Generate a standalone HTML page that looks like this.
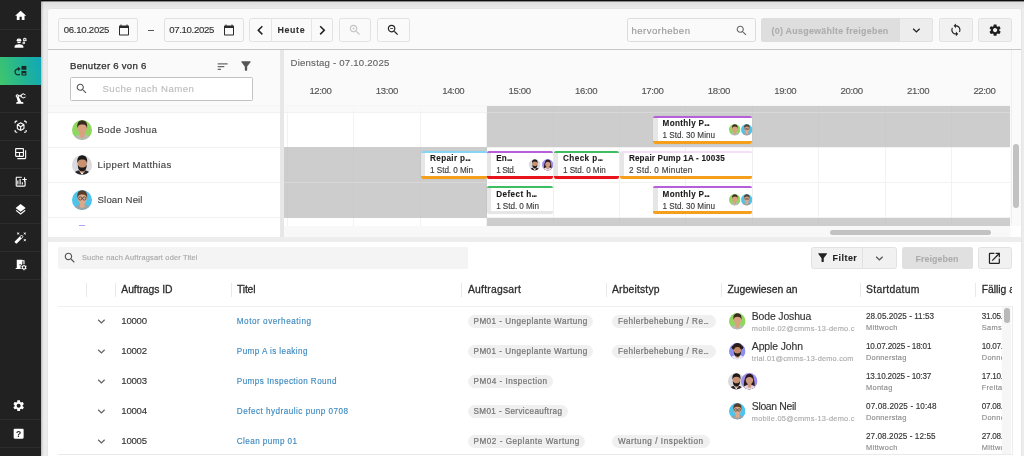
<!DOCTYPE html>
<html lang="de"><head><meta charset="utf-8"><title>Plantafel</title>
<style>
html,body{margin:0;padding:0}
body{width:1024px;height:456px;overflow:hidden;position:relative;background:#ececec;font-family:"Liberation Sans", sans-serif;will-change:transform}
.b{position:absolute}
.ic{position:absolute;display:block;overflow:visible}
.t{position:absolute;white-space:nowrap;display:block}
.c{overflow:hidden}
.e{letter-spacing:-.085em}
</style></head>
<body>
<div class="b" style="left:0.00px;top:0.00px;width:1024.00px;height:10.00px;background:linear-gradient(#dcdcdc,#ececec)"></div>
<div class="b" style="left:0.00px;top:0.00px;width:1024.00px;height:1.00px;background:#0d0d0d"></div>
<div class="b" style="left:0.00px;top:1.00px;width:1024.00px;height:1.00px;background:rgba(0,0,0,.38)"></div>
<div class="b" style="left:0.00px;top:0.00px;width:41.30px;height:456.00px;background:#212121;box-shadow:1px 0 2px rgba(0,0,0,.25)"></div>
<div class="b" style="left:0.00px;top:28.75px;width:41.30px;height:1.00px;background:#2c2c2c"></div>
<div class="b" style="left:0.00px;top:56.50px;width:41.30px;height:1.00px;background:#2c2c2c"></div>
<div class="b" style="left:0.00px;top:84.25px;width:41.30px;height:1.00px;background:#2c2c2c"></div>
<div class="b" style="left:0.00px;top:112.00px;width:41.30px;height:1.00px;background:#2c2c2c"></div>
<div class="b" style="left:0.00px;top:139.75px;width:41.30px;height:1.00px;background:#2c2c2c"></div>
<div class="b" style="left:0.00px;top:167.50px;width:41.30px;height:1.00px;background:#2c2c2c"></div>
<div class="b" style="left:0.00px;top:195.25px;width:41.30px;height:1.00px;background:#2c2c2c"></div>
<div class="b" style="left:0.00px;top:223.00px;width:41.30px;height:1.00px;background:#2c2c2c"></div>
<div class="b" style="left:0.00px;top:250.75px;width:41.30px;height:1.00px;background:#2c2c2c"></div>
<div class="b" style="left:0.00px;top:278.50px;width:41.30px;height:1.00px;background:#2c2c2c"></div>
<div class="b" style="left:0.00px;top:57.00px;width:41.30px;height:27.75px;background:linear-gradient(75deg,#40c66b 0%,#22b494 55%,#10a7ba 100%)"></div>
<div class="b" style="left:0.00px;top:419.00px;width:41.30px;height:1.00px;background:#2c2c2c"></div>
<div class="b" style="left:0.00px;top:447.10px;width:41.30px;height:1.00px;background:#2c2c2c"></div>
<svg class="ic" style="left:14.15px;top:8.72px;width:13.30px;height:13.30px" viewBox="0 0 24 24" fill="#fff"><path d="M10 20v-6h4v6h5v-8h3L12 3 2 12h3v8z"/></svg>
<svg class="ic" style="left:14.15px;top:36.48px;width:13.30px;height:13.30px" viewBox="0 0 24 24"><path fill="#fff" d="M9 15c-2.670 0-8 1.340-8 4v2h16v-2c0-2.660-5.330-4-8-4zM22.100 6.840c.010-.110.020-.220.020-.340 0-.120-.010-.230-.030-.340l.740-.580c.070-.050.080-.150.040-.220l-.700-1.210c-.040-.080-.140-.100-.210-.080l-.860.350c-.180-.140-.380-.250-.590-.340l-.130-.930c-.020-.090-.090-.150-.180-.150h-1.400c-.090 0-.160.060-.170.150l-.130.930c-.210.090-.410.210-.590.340l-.870-.350c-.080-.030-.170 0-.210.080l-.700 1.210c-.040.080-.030.170.040.220l.740.580c-.020.110-.030.230-.030.340 0 .110.010.230.030.340l-.740.580c-.070.050-.080.150-.040.220l.700 1.210c.040.080.140.100.210.080l.870-.350c.180.140.380.250.590.340l.130.930c.010.090.080.150.170.150h1.400c.090 0 .160-.060.170-.150l.130-.930c.210-.090.410-.210.590-.340l.870.350c.080.030.170 0 .210-.080l.700-1.210c.040-.080.030-.170-.040-.220l-.730-.580zm-2.600.910c-.690 0-1.250-.560-1.250-1.250s.560-1.250 1.250-1.250 1.250.560 1.250 1.250-.560 1.250-1.250 1.250zM19.920 11.680l-.500-.870c-.030-.060-.100-.080-.150-.060l-.620.250c-.130-.100-.270-.180-.420-.240l-.090-.660c-.020-.060-.080-.100-.140-.100h-1c-.060 0-.110.040-.120.110l-.090.660c-.150.060-.290.150-.420.240l-.620-.250c-.060-.020-.120 0-.150.060l-.500.870c-.030.060-.020.120.030.160l.530.410c-.010.080-.020.160-.020.240 0 .080.010.170.020.240l-.530.410c-.050.040-.060.110-.030.160l.500.870c.030.060.100.080.150.060l.620-.250c.130.100.270.180.420.240l.090.660c.010.070.060.110.120.110h1c.060 0 .120-.040.120-.110l.090-.660c.150-.060.290-.150.420-.240l.620.250c.060.020.120 0 .150-.060l.500-.870c.030-.060.020-.120-.030-.160l-.520-.410c.010-.080.020-.160.020-.240 0-.080-.010-.170-.020-.240l.530-.410c.050-.040.060-.110.030-.160zm-3.420 1.650c-.460 0-.830-.380-.830-.830 0-.460.380-.830.830-.830s.830.380.830.830c0 .460-.370.830-.830.830zM4.740 9h8.530c.270 0 .490-.220.490-.490v-.020c0-.270-.220-.490-.490-.490H13c0-1.480-.810-2.750-2-3.450V5.500c0 .280-.220.500-.5.500s-.5-.220-.5-.5V4.140C9.680 4.060 9.350 4 9 4s-.680.060-1 .140V5.500c0 .280-.220.500-.5.500S7 5.780 7 5.500v-.950C5.810 5.250 5 6.520 5 8h-.260c-.270 0-.490.220-.490.490v.030c0 .260.220.480.490.480zM9 13c1.860 0 3.410-1.280 3.860-3H5.140c.450 1.720 2 3 3.860 3z"/></svg>
<svg class="ic" style="left:14.15px;top:64.22px;width:13.30px;height:13.30px" viewBox="0 0 24 24"><g fill="#1b2626"><path d="M10.700 18.400A5.400 5.400 0 1 1 7.200 8.800" fill="none" stroke="#1b2626" stroke-width="2.300"/><path d="M7 5l5 3.800L7 12.600z"/><rect x="13.600" y="3.500" width="8.700" height="6.900"/><path d="M13.600 12.700h8.700v8.200h-8.700zM15.400 16.600v2.400h5.100v-2.400z" fill-rule="evenodd"/></g></svg>
<svg class="ic" style="left:14.15px;top:91.97px;width:13.30px;height:13.30px" viewBox="0 0 24 24"><path fill="#fff" d="M19.930 8.350l-3.600 1.680L14 7.700V6.300l2.330-2.330 3.600 1.680c.380.180.820.010 1-.360.180-.380.010-.820-.360-1l-3.920-1.830c-.380-.180-.830-.100-1.130.200L13.780 4.400c-.180-.240-.460-.400-.780-.400-.550 0-1 .450-1 1v1H8.820C8.400 4.840 7.300 4 6 4 4.340 4 3 5.340 3 7c0 1.100.600 2.050 1.480 2.580L7.080 18H6c-1.100 0-2 .900-2 2v1h13v-1c0-1.100-.900-2-2-2h-1.620L8.410 8.770c.170-.240.310-.490.410-.770H12v1c0 .550.450 1 1 1 .320 0 .600-.160.780-.400l1.740 1.740c.300.300.750.380 1.130.200l3.920-1.830c.380-.180.540-.620.360-1-.180-.370-.620-.540-1-.360zM6 8c-.550 0-1-.450-1-1s.450-1 1-1 1 .450 1 1-.450 1-1 1z"/></svg>
<svg class="ic" style="left:14.15px;top:119.72px;width:13.30px;height:13.30px" viewBox="0 0 24 24" fill="#fff"><path d="M3 4c0-.55.45-1 1-1h2V1H4C2.34 1 1 2.34 1 4v2h2V4zm0 16v-2H1v2c0 1.66 1.34 3 3 3h2v-2H4c-.55 0-1-.45-1-1zM20 1h-2v2h2c.55 0 1 .45 1 1v2h2V4c0-1.660-1.340-3-3-3zm1 19c0 .55-.45 1-1 1h-2v2h2c1.660 0 3-1.340 3-3v-2h-2v2zm-2-5.130V9.130c0-.720-.380-1.380-1-1.730l-5-2.880c-.310-.180-.650-.270-1-.270s-.690.090-1 .270L6 7.390c-.620.360-1 1.020-1 1.740v5.740c0 .720.380 1.380 1 1.730l5 2.880c.310.180.650.270 1 .270s.690-.090 1-.270l5-2.880c.620-.350 1-1.010 1-1.730zm-8 2.300l-4-2.300v-4.630l4 2.330v4.600zm1-6.330L8.040 8.530 12 6.250l3.960 2.280L12 10.840zm5 4.030l-4 2.300v-4.600l4-2.330v4.630z"/></svg>
<svg class="ic" style="left:14.15px;top:147.47px;width:13.30px;height:13.30px" viewBox="0 0 24 24" fill="#fff"><path d="M20 6v14H6v2h14c1.100 0 2-.9 2-2V6h-2zM16 2H4c-1.100 0-2 .9-2 2v12c0 1.100.9 2 2 2h12c1.100 0 2-.9 2-2V4c0-1.100-.9-2-2-2zM9 16H4v-5h5v5zm7 0h-5v-5h5v5zm0-7H4V4h12v5z"/></svg>
<svg class="ic" style="left:14.15px;top:175.22px;width:13.30px;height:13.30px" viewBox="0 0 24 24" fill="#fff"><path d="M6 10h2v7H6zM14 13h2v4h-2zM10 7h2v10h-2zM20 7V4h-2v3h-3v2h3v3h2V9h3V7zM19 19H5V5h9V3H5c-1.100 0-2 .9-2 2v14c0 1.100.9 2 2 2h14c1.100 0 2-.9 2-2v-9h-2v9z"/></svg>
<svg class="ic" style="left:14.15px;top:202.97px;width:13.30px;height:13.30px" viewBox="0 0 24 24" fill="#fff"><path d="M11.99 18.54l-7.37-5.73L3 14.07l9 7 9-7-1.63-1.27-7.38 5.74zM12 16l7.36-5.73L21 9l-9-7-9 7 1.63 1.27L12 16z"/></svg>
<svg class="ic" style="left:14.15px;top:230.72px;width:13.30px;height:13.30px" viewBox="0 0 24 24" fill="#fff"><path d="M7.5 5.600L10 7 8.600 4.500 10 2 7.500 3.400 5 2l1.400 2.500L5 7zM19.500 15.400L17 14l1.400 2.500L17 19l2.500-1.400L22 19l-1.400-2.500L22 14zM22 2l-2.500 1.400L17 2l1.400 2.500L17 7l2.500-1.400L22 7l-1.400-2.500zM14.370 7.290c-.390-.390-1.020-.390-1.410 0L1.290 18.960c-.390.390-.390 1.020 0 1.410l2.340 2.340c.390.390 1.020.390 1.410 0L16.700 11.050c.390-.390.390-1.020 0-1.410l-2.330-2.350zm-1.030 5.490l-2.120-2.120 2.440-2.440 2.120 2.120-2.440 2.440z"/></svg>
<svg class="ic" style="left:14.15px;top:258.48px;width:13.30px;height:13.30px" viewBox="0 0 24 24"><path fill="#fff" fill-rule="evenodd" d="M21.690 16.370l1.140-1-1-1.730-1.450.490c-.320-.270-.680-.480-1.080-.630L19 12h-2l-.300 1.490c-.400.150-.760.360-1.080.630l-1.450-.490-1 1.730 1.140 1c-.080.500-.080.760 0 1.260l-1.140 1 1 1.730 1.450-.490c.320.270.680.480 1.080.630L17 22h2l.300-1.490c.400-.150.760-.360 1.080-.630l1.450.490 1-1.730-1.140-1c.080-.510.080-.770 0-1.270zM18 19c-1.100 0-2-.9-2-2s.9-2 2-2 2 .9 2 2-.9 2-2 2zM5 3h10v1h4v6.800h-2V6h-2v5.300c-2 .9-3.300 3-3.300 5.300 0 1.300.3 2.400.9 3.400H3v-2h2zM10 11v2h2v-2z"/></svg>
<svg class="ic" style="left:11.75px;top:399.15px;width:13.30px;height:13.30px" viewBox="0 0 24 24" fill="#fff"><path d="M19.14 12.94c.04-.3.06-.61.06-.94 0-.32-.02-.64-.07-.94l2.03-1.58c.18-.14.23-.41.12-.61l-1.92-3.32c-.12-.22-.37-.29-.59-.22l-2.39.96c-.5-.38-1.03-.7-1.62-.94l-.36-2.54c-.04-.24-.24-.41-.48-.41h-3.84c-.24 0-.43.17-.47.41l-.36 2.54c-.59.24-1.13.57-1.62.94l-2.39-.96c-.22-.08-.47 0-.59.22L2.74 8.87c-.12.21-.08.47.12.61l2.03 1.58c-.05.3-.09.63-.09.94s.02.64.07.94l-2.03 1.58c-.18.14-.23.41-.12.61l1.92 3.32c.12.22.37.29.59.22l2.39-.96c.5.38 1.03.7 1.62.94l.36 2.54c.05.24.24.41.48.41h3.84c.24 0 .44-.17.47-.41l.36-2.54c.59-.24 1.13-.56 1.62-.94l2.39.96c.22.08.47 0 .59-.22l1.92-3.32c.12-.22.07-.47-.12-.61l-2.01-1.58zM12 15.6c-1.98 0-3.6-1.62-3.6-3.6s1.62-3.6 3.6-3.6 3.6 1.62 3.6 3.6-1.62 3.6-3.6 3.6z"/></svg>
<svg class="ic" style="left:11.75px;top:426.95px;width:13.30px;height:13.30px" viewBox="0 0 24 24"><rect x="3" y="3" width="18" height="18" rx="2" fill="#fff"/><text x="12" y="17.800" text-anchor="middle" font-family="Liberation Sans, sans-serif" font-weight="700" font-size="15.500" fill="#212121">?</text></svg>
<div class="b" style="left:48.00px;top:9.00px;width:973.00px;height:453.00px;background:#ededed;border-radius:2.500px;box-shadow:0 0 1.500px rgba(0,0,0,.12)"></div>
<div class="b" style="left:48.00px;top:9.00px;width:973.00px;height:228.40px;background:#fafafa;border-radius:2.500px 2.500px 0 0"></div>
<div class="b" style="left:48.00px;top:49.00px;width:973.00px;height:1.40px;background:#c6c6c6"></div>
<div class="b" style="left:58.10px;top:18.10px;width:79.90px;height:23.50px;box-sizing:border-box;border-radius:2.500px;background:#fafafa;border:1px solid #e0e0e0"></div>
<span class="t" style="left:63.70px;top:23px;font-size:9.60px;line-height:14px;color:#333;letter-spacing:-0.257px;-webkit-text-stroke:0.14px">06.10.2025</span>
<svg class="ic" style="left:118.10px;top:24.40px;width:12.00px;height:12.00px" viewBox="0 0 24 24" fill="#2b2b2b"><path d="M20 3h-1V1h-2v2H7V1H5v2H4c-1.1 0-2 .9-2 2v16c0 1.1.9 2 2 2h16c1.1 0 2-.9 2-2V5c0-1.1-.9-2-2-2zm0 18H4V8h16v13z"/></svg>
<div class="b" style="left:148.00px;top:29.60px;width:5.60px;height:0.90px;background:#555"></div>
<div class="b" style="left:163.60px;top:18.10px;width:80.00px;height:23.50px;box-sizing:border-box;border-radius:2.500px;background:#fafafa;border:1px solid #e0e0e0"></div>
<span class="t" style="left:169.20px;top:23px;font-size:9.60px;line-height:14px;color:#333;letter-spacing:-0.324px;-webkit-text-stroke:0.14px">07.10.2025</span>
<svg class="ic" style="left:223.10px;top:24.40px;width:12.00px;height:12.00px" viewBox="0 0 24 24" fill="#2b2b2b"><path d="M20 3h-1V1h-2v2H7V1H5v2H4c-1.1 0-2 .9-2 2v16c0 1.1.9 2 2 2h16c1.1 0 2-.9 2-2V5c0-1.1-.9-2-2-2zm0 18H4V8h16v13z"/></svg>
<div class="b" style="left:248.60px;top:18.10px;width:84.90px;height:23.50px;box-sizing:border-box;border-radius:2.500px;background:#fafafa;border:1px solid #e2e2e2"></div>
<div class="b" style="left:271.20px;top:18.10px;width:1.00px;height:23.50px;background:#e6e6e6"></div>
<div class="b" style="left:310.50px;top:18.10px;width:1.00px;height:23.50px;background:#e6e6e6"></div>
<svg class="ic" style="left:250.55px;top:20.65px;width:18.50px;height:18.50px" viewBox="0 0 24 24" fill="#222"><path d="M15.41 7.41L14 6l-6 6 6 6 1.41-1.41L10.83 12z"/></svg>
<span class="t" style="left:277.60px;top:23px;font-size:8.90px;line-height:14px;color:#333;font-weight:700;letter-spacing:0.582px;-webkit-text-stroke:0.10px">Heute</span>
<svg class="ic" style="left:313.05px;top:20.65px;width:18.50px;height:18.50px" viewBox="0 0 24 24" fill="#222"><path d="M10 6L8.59 7.41 13.17 12l-4.58 4.59L10 18l6-6z"/></svg>
<div class="b" style="left:338.50px;top:18.10px;width:32.80px;height:23.50px;box-sizing:border-box;border-radius:2.500px;background:#fafafa;border:1px solid #e2e2e2"></div>
<svg class="ic" style="left:348.30px;top:23.20px;width:14.00px;height:14.00px" viewBox="0 0 24 24" fill="#c4c4c4"><path d="M15.5 14h-.79l-.28-.27C15.41 12.59 16 11.11 16 9.5 16 5.91 13.09 3 9.5 3S3 5.91 3 9.5 5.91 16 9.5 16c1.61 0 3.09-.59 4.23-1.57l.27.28v.79l5 4.99L20.49 19l-4.99-5zm-6 0C7.01 14 5 11.99 5 9.5S7.01 5 9.5 5 14 7.01 14 9.5 11.99 14 9.5 14zM12 10h-2v2H9v-2H7V9h2V7h1v2h2v1z"/></svg>
<div class="b" style="left:376.60px;top:18.10px;width:33.00px;height:23.50px;box-sizing:border-box;border-radius:2.500px;background:#fafafa;border:1px solid #e2e2e2"></div>
<svg class="ic" style="left:386.20px;top:23.10px;width:14.20px;height:14.20px" viewBox="0 0 24 24" fill="#222"><path d="M15.5 14h-.79l-.28-.27C15.41 12.59 16 11.11 16 9.5 16 5.91 13.09 3 9.5 3S3 5.91 3 9.5 5.91 16 9.5 16c1.61 0 3.09-.59 4.23-1.57l.27.28v.79l5 4.99L20.49 19l-4.99-5zm-6 0C7.01 14 5 11.99 5 9.5S7.01 5 9.5 5 14 7.01 14 9.5 11.99 14 9.5 14zM7 9h5v1H7z"/></svg>
<div class="b" style="left:627.00px;top:18.10px;width:128.60px;height:23.50px;box-sizing:border-box;border-radius:2.500px;background:#fafafa;border:1px solid #dcdcdc"></div>
<span class="t" style="left:631.40px;top:24px;font-size:9.60px;line-height:14px;color:#9a9a9a;letter-spacing:0.473px;-webkit-text-stroke:0.14px">hervorheben</span>
<svg class="ic" style="left:734.75px;top:23.55px;width:13.30px;height:13.30px" viewBox="0 0 24 24" fill="#666"><path d="M15.5 14h-.79l-.28-.27C15.41 12.59 16 11.11 16 9.5 16 5.91 13.09 3 9.5 3S3 5.91 3 9.5 5.91 16 9.5 16c1.61 0 3.09-.59 4.23-1.57l.27.28v.79l5 4.99L20.49 19l-4.99-5zm-6 0C7.01 14 5 11.99 5 9.5S7.01 5 9.5 5 14 7.01 14 9.5 11.99 14 9.5 14z"/></svg>
<div class="b" style="left:761.00px;top:18.10px;width:138.80px;height:23.50px;box-sizing:border-box;border-radius:2.500px;background:#dedede;border-radius:2.500px 0 0 2.500px"></div>
<span class="t" style="left:771.50px;top:24px;font-size:8.90px;line-height:14px;color:#adadad;font-weight:700;letter-spacing:0.277px;-webkit-text-stroke:0.10px">(0) Ausgewählte freigeben</span>
<div class="b" style="left:899.60px;top:18.10px;width:33.90px;height:23.50px;box-sizing:border-box;border-radius:2.500px;background:#ededed;border:1px solid #e2e2e2;border-left:0;border-radius:0 2.500px 2.500px 0"></div>
<svg class="ic" style="left:909.10px;top:22.80px;width:14.80px;height:14.80px" viewBox="0 0 24 24" fill="#222"><path d="M16.59 8.59L12 13.17 7.41 8.59 6 10l6 6 6-6z"/></svg>
<div class="b" style="left:939.00px;top:18.10px;width:33.50px;height:23.50px;box-sizing:border-box;border-radius:2.500px;background:#f1f1f1;border:1px solid #e2e2e2"></div>
<svg class="ic" style="left:948.80px;top:23.30px;width:13.80px;height:13.80px" viewBox="0 0 24 24" fill="#222"><path d="M12 4V1L8 5l4 4V6c3.31 0 6 2.69 6 6 0 1.01-.25 1.97-.7 2.8l1.46 1.46C19.54 15.03 20 13.57 20 12c0-4.42-3.58-8-8-8zm0 14c-3.31 0-6-2.69-6-6 0-1.01.25-1.97.7-2.8L5.24 7.74C4.46 8.97 4 10.43 4 12c0 4.42 3.58 8 8 8v3l4-4-4-4v3z"/></svg>
<div class="b" style="left:977.50px;top:18.10px;width:34.30px;height:23.50px;box-sizing:border-box;border-radius:2.500px;background:#f1f1f1;border:1px solid #e2e2e2"></div>
<svg class="ic" style="left:987.60px;top:23.10px;width:14.20px;height:14.20px" viewBox="0 0 24 24" fill="#1d1d1d"><path d="M19.14 12.94c.04-.3.06-.61.06-.94 0-.32-.02-.64-.07-.94l2.03-1.58c.18-.14.23-.41.12-.61l-1.92-3.32c-.12-.22-.37-.29-.59-.22l-2.39.96c-.5-.38-1.03-.7-1.62-.94l-.36-2.54c-.04-.24-.24-.41-.48-.41h-3.84c-.24 0-.43.17-.47.41l-.36 2.54c-.59.24-1.13.57-1.62.94l-2.39-.96c-.22-.08-.47 0-.59.22L2.74 8.87c-.12.21-.08.47.12.61l2.03 1.58c-.05.3-.09.63-.09.94s.02.64.07.94l-2.03 1.58c-.18.14-.23.41-.12.61l1.92 3.32c.12.22.37.29.59.22l2.39-.96c.5.38 1.03.7 1.62.94l.36 2.54c.05.24.24.41.48.41h3.84c.24 0 .44-.17.47-.41l.36-2.54c.59-.24 1.13-.56 1.62-.94l2.39.96c.22.08.47 0 .59-.22l1.92-3.32c.12-.22.07-.47-.12-.61l-2.01-1.58zM12 15.6c-1.98 0-3.6-1.62-3.6-3.6s1.62-3.6 3.6-3.6 3.6 1.62 3.6 3.6-1.62 3.6-3.6 3.6z"/></svg>
<div class="b" style="left:48.00px;top:105.50px;width:231.50px;height:131.90px;background:#fff"></div>
<span class="t" style="left:70.00px;top:59px;font-size:9.62px;line-height:14px;color:#2e2e2e;letter-spacing:0.243px;-webkit-text-stroke:0.25px">Benutzer 6 von 6</span>
<svg class="ic" style="left:215.85px;top:59.55px;width:13.30px;height:13.30px" viewBox="0 0 24 24" fill="#6a6a6a"><path d="M3 18h6v-2H3v2zM3 6v2h18V6H3zm0 7h12v-2H3v2z"/></svg>
<svg class="ic" style="left:238.60px;top:59.20px;width:14.00px;height:14.00px" viewBox="0 0 24 24" fill="#555"><path d="M4.25 5.61C6.27 8.2 10 13 10 13v6c0 .55.45 1 1 1h2c.55 0 1-.45 1-1v-6s3.72-4.8 5.74-7.39c.51-.66.04-1.61-.79-1.61H5.04c-.83 0-1.3.95-.79 1.61z"/></svg>
<div class="b" style="left:70.00px;top:77.00px;width:183.00px;height:24.00px;box-sizing:border-box;background:#fff;border:1px solid #c2c2c2;border-radius:1.500px"></div>
<svg class="ic" style="left:75.15px;top:82.35px;width:13.30px;height:13.30px" viewBox="0 0 24 24" fill="#555"><path d="M15.5 14h-.79l-.28-.27C15.41 12.59 16 11.11 16 9.5 16 5.91 13.09 3 9.5 3S3 5.91 3 9.5 5.91 16 9.5 16c1.61 0 3.09-.59 4.23-1.57l.27.28v.79l5 4.99L20.49 19l-4.99-5zm-6 0C7.01 14 5 11.99 5 9.5S7.01 5 9.5 5 14 7.01 14 9.5 11.99 14 9.5 14z"/></svg>
<span class="t" style="left:102.50px;top:82px;font-size:9.62px;line-height:14px;color:#bdbdbd;letter-spacing:0.460px;-webkit-text-stroke:0.14px">Suche nach Namen</span>
<div class="b" style="left:48.00px;top:105.50px;width:231.50px;height:6.50px;background:#f9f9f9"></div>
<div class="b" style="left:48.00px;top:105.00px;width:231.50px;height:1.00px;background:#f4f4f4"></div>
<div class="b" style="left:48.00px;top:111.50px;width:231.50px;height:1.00px;background:#f1f1f1"></div>
<div class="b" style="left:48.00px;top:146.50px;width:231.50px;height:1.00px;background:#f1f1f1"></div>
<div class="b" style="left:48.00px;top:181.50px;width:231.50px;height:1.00px;background:#f1f1f1"></div>
<div class="b" style="left:48.00px;top:216.50px;width:231.50px;height:1.00px;background:#f1f1f1"></div>
<svg class="ic" style="left:71.50px;top:119.50px;width:20.00px;height:20.00px" viewBox="0 0 40 40"><defs><clipPath id="c1"><circle cx="20" cy="20" r="20"/></clipPath></defs><g clip-path="url(#c1)"><rect width="40" height="40" fill="#8fd75f"/><path d="M4 42c0-9 5-13 16.500-13S37 33 37 42z" fill="#b9b9b9"/><g transform="translate(20.500 16.300) scale(1.250) translate(-20 -17.500)"><rect x="16.300" y="23" width="7.400" height="10" rx="2.500" fill="#d9a17f"/><ellipse cx="20" cy="17.500" rx="7.300" ry="9.300" fill="#d9a17f"/><path d="M12.400 18c-1.600-9 2.600-13 7.600-13s9.200 4 7.600 13c-.8-4.500-2.300-6.500-7.600-6.500S13.200 13.500 12.400 18z" fill="#3a2a20"/></g></g></svg>
<span class="t" style="left:97.60px;top:123px;font-size:9.62px;line-height:14px;color:#444;letter-spacing:0.319px;-webkit-text-stroke:0.14px">Bode Joshua</span>
<svg class="ic" style="left:71.50px;top:154.50px;width:20.00px;height:20.00px" viewBox="0 0 40 40"><defs><clipPath id="c2"><circle cx="20" cy="20" r="20"/></clipPath></defs><g clip-path="url(#c2)"><rect width="40" height="40" fill="#d9d9de"/><path d="M4 42c0-9 5-13 16.500-13S37 33 37 42z" fill="#f2f2f2"/><path d="M4 42c0-8 4-10.500 10-11.300l6 9.300 6-9.300c6 .8 10 3.300 10 11.300z" fill="#25252b"/><path d="M15 30.500l5 9 5-9z" fill="#f6f6f6"/><g transform="translate(20.500 16.300) scale(1.250) translate(-20 -17.500)"><rect x="16.300" y="23" width="7.400" height="10" rx="2.500" fill="#c9916f"/><ellipse cx="20" cy="17.500" rx="7.300" ry="9.300" fill="#c9916f"/><path d="M12.400 18c-1.600-9 2.600-13 7.600-13s9.200 4 7.600 13c-.8-4.500-2.300-6.500-7.600-6.500S13.200 13.500 12.400 18z" fill="#1d1a19"/><path d="M12.800 19.500c.3 9 3.400 11 7.200 11s6.900-2 7.200-11c-1.500 4-3.700 5-7.200 5s-5.700-1-7.200-5z" fill="#1d1a19"/></g></g></svg>
<span class="t" style="left:97.60px;top:158px;font-size:9.62px;line-height:14px;color:#444;letter-spacing:0.355px;-webkit-text-stroke:0.14px">Lippert Matthias</span>
<svg class="ic" style="left:71.50px;top:189.50px;width:20.00px;height:20.00px" viewBox="0 0 40 40"><defs><clipPath id="c3"><circle cx="20" cy="20" r="20"/></clipPath></defs><g clip-path="url(#c3)"><rect width="40" height="40" fill="#4cc4ec"/><path d="M4 42c0-9 5-13 16.500-13S37 33 37 42z" fill="#9aa3a8"/><g transform="translate(20.500 16.300) scale(1.250) translate(-20 -17.500)"><rect x="16.300" y="23" width="7.400" height="10" rx="2.500" fill="#dca98a"/><ellipse cx="20" cy="17.500" rx="7.300" ry="9.300" fill="#dca98a"/><path d="M12.400 18c-1.600-9 2.600-13 7.600-13s9.200 4 7.600 13c-.8-4.500-2.300-6.500-7.600-6.500S13.200 13.500 12.400 18z" fill="#5a3b28"/><g fill="none" stroke="#333" stroke-width="1.100"><circle cx="16.800" cy="18" r="2.600"/><circle cx="23.200" cy="18" r="2.600"/><path d="M19.400 18h1.200"/></g></g></g></svg>
<span class="t" style="left:97.60px;top:193px;font-size:9.62px;line-height:14px;color:#444;letter-spacing:0.121px;-webkit-text-stroke:0.14px">Sloan Neil</span>
<div class="b" style="left:79.00px;top:224.60px;width:5.50px;height:0.80px;background:#a9a6f2"></div>
<div class="b" style="left:279.50px;top:50.40px;width:4.30px;height:187.00px;background:#e7e7e7"></div>
<span class="t" style="left:290.50px;top:56px;font-size:9.62px;line-height:14px;color:#666;letter-spacing:0.212px;-webkit-text-stroke:0.14px">Dienstag - 07.10.2025</span>
<span class="t" style="left:309.40px;top:84px;font-size:9.60px;line-height:14px;color:#555;letter-spacing:-0.379px;-webkit-text-stroke:0.14px">12:00</span>
<span class="t" style="left:375.80px;top:84px;font-size:9.60px;line-height:14px;color:#555;letter-spacing:-0.379px;-webkit-text-stroke:0.14px">13:00</span>
<span class="t" style="left:442.20px;top:84px;font-size:9.60px;line-height:14px;color:#555;letter-spacing:-0.379px;-webkit-text-stroke:0.14px">14:00</span>
<span class="t" style="left:508.60px;top:84px;font-size:9.60px;line-height:14px;color:#555;letter-spacing:-0.379px;-webkit-text-stroke:0.14px">15:00</span>
<span class="t" style="left:575.00px;top:84px;font-size:9.60px;line-height:14px;color:#555;letter-spacing:-0.379px;-webkit-text-stroke:0.14px">16:00</span>
<span class="t" style="left:641.40px;top:84px;font-size:9.60px;line-height:14px;color:#555;letter-spacing:-0.379px;-webkit-text-stroke:0.14px">17:00</span>
<span class="t" style="left:707.80px;top:84px;font-size:9.60px;line-height:14px;color:#555;letter-spacing:-0.379px;-webkit-text-stroke:0.14px">18:00</span>
<span class="t" style="left:774.20px;top:84px;font-size:9.60px;line-height:14px;color:#555;letter-spacing:-0.379px;-webkit-text-stroke:0.14px">19:00</span>
<span class="t" style="left:840.60px;top:84px;font-size:9.60px;line-height:14px;color:#555;letter-spacing:-0.379px;-webkit-text-stroke:0.14px">20:00</span>
<span class="t" style="left:907.00px;top:84px;font-size:9.60px;line-height:14px;color:#555;letter-spacing:-0.379px;-webkit-text-stroke:0.14px">21:00</span>
<span class="t" style="left:973.40px;top:84px;font-size:9.60px;line-height:14px;color:#555;letter-spacing:-0.379px;-webkit-text-stroke:0.14px">22:00</span>
<div class="b" style="left:283.80px;top:105.50px;width:726.70px;height:120.00px;background:#fff"></div>
<div class="b" style="left:286.90px;top:105.50px;width:1.00px;height:120.00px;background:#f5f5f5"></div>
<div class="b" style="left:353.30px;top:105.50px;width:1.00px;height:120.00px;background:#f5f5f5"></div>
<div class="b" style="left:419.70px;top:105.50px;width:1.00px;height:120.00px;background:#f5f5f5"></div>
<div class="b" style="left:486.10px;top:105.50px;width:1.00px;height:120.00px;background:#f5f5f5"></div>
<div class="b" style="left:552.50px;top:105.50px;width:1.00px;height:120.00px;background:#f5f5f5"></div>
<div class="b" style="left:618.90px;top:105.50px;width:1.00px;height:120.00px;background:#f5f5f5"></div>
<div class="b" style="left:685.30px;top:105.50px;width:1.00px;height:120.00px;background:#f5f5f5"></div>
<div class="b" style="left:751.70px;top:105.50px;width:1.00px;height:120.00px;background:#f5f5f5"></div>
<div class="b" style="left:818.10px;top:105.50px;width:1.00px;height:120.00px;background:#f5f5f5"></div>
<div class="b" style="left:884.50px;top:105.50px;width:1.00px;height:120.00px;background:#f5f5f5"></div>
<div class="b" style="left:950.90px;top:105.50px;width:1.00px;height:120.00px;background:#f5f5f5"></div>
<div class="b" style="left:1017.30px;top:105.50px;width:1.00px;height:120.00px;background:#f5f5f5"></div>
<div class="b" style="left:283.80px;top:111.50px;width:726.70px;height:1.00px;background:#f2f2f2"></div>
<div class="b" style="left:283.80px;top:146.50px;width:726.70px;height:1.00px;background:#f2f2f2"></div>
<div class="b" style="left:283.80px;top:181.50px;width:726.70px;height:1.00px;background:#f2f2f2"></div>
<div class="b" style="left:283.80px;top:217.00px;width:726.70px;height:1.00px;background:#f2f2f2"></div>
<div class="b" style="left:486.80px;top:105.50px;width:523.70px;height:41.50px;background:#cdcdcd"></div>
<div class="b" style="left:283.80px;top:147.00px;width:203.00px;height:70.50px;background:#cdcdcd"></div>
<div class="b" style="left:486.80px;top:217.50px;width:523.70px;height:8.00px;background:#cdcdcd"></div>
<div class="b" style="left:283.80px;top:105.50px;width:203.00px;height:6.50px;background:#f9f9f9"></div>
<div class="b" style="left:283.80px;top:105.00px;width:726.70px;height:1.00px;background:rgba(244,244,244,.7)"></div>
<div class="b" style="left:286.90px;top:105.50px;width:1.00px;height:120.00px;background:rgba(0,0,0,.012)"></div>
<div class="b" style="left:353.30px;top:105.50px;width:1.00px;height:120.00px;background:rgba(0,0,0,.012)"></div>
<div class="b" style="left:419.70px;top:105.50px;width:1.00px;height:120.00px;background:rgba(0,0,0,.012)"></div>
<div class="b" style="left:486.10px;top:105.50px;width:1.00px;height:120.00px;background:rgba(0,0,0,.012)"></div>
<div class="b" style="left:552.50px;top:105.50px;width:1.00px;height:120.00px;background:rgba(0,0,0,.012)"></div>
<div class="b" style="left:618.90px;top:105.50px;width:1.00px;height:120.00px;background:rgba(0,0,0,.012)"></div>
<div class="b" style="left:685.30px;top:105.50px;width:1.00px;height:120.00px;background:rgba(0,0,0,.012)"></div>
<div class="b" style="left:751.70px;top:105.50px;width:1.00px;height:120.00px;background:rgba(0,0,0,.012)"></div>
<div class="b" style="left:818.10px;top:105.50px;width:1.00px;height:120.00px;background:rgba(0,0,0,.012)"></div>
<div class="b" style="left:884.50px;top:105.50px;width:1.00px;height:120.00px;background:rgba(0,0,0,.012)"></div>
<div class="b" style="left:950.90px;top:105.50px;width:1.00px;height:120.00px;background:rgba(0,0,0,.012)"></div>
<div class="b" style="left:1017.30px;top:105.50px;width:1.00px;height:120.00px;background:rgba(0,0,0,.012)"></div>
<div class="b" style="left:486.80px;top:111.50px;width:523.70px;height:1.00px;background:rgba(255,255,255,.22)"></div>
<div class="b" style="left:283.80px;top:181.50px;width:203.00px;height:1.00px;background:rgba(255,255,255,.22)"></div>
<div class="b" style="left:653.30px;top:115.70px;width:99.20px;height:27.90px;background:#fff;border-radius:2px;box-shadow:0 0 1px rgba(0,0,0,.12)"></div>
<div class="b" style="left:653.30px;top:117.20px;width:4.50px;height:24.90px;background:#e6e6e6"></div>
<div class="b" style="left:653.30px;top:115.70px;width:99.20px;height:2.40px;background:#b560d8;border-radius:2px 2px 0 0"></div>
<div class="b" style="left:653.30px;top:140.90px;width:99.20px;height:2.70px;background:#f5a01c;border-radius:0 0 2px 2px"></div>
<span class="t" style="left:662.60px;top:117px;font-size:8.14px;line-height:14px;color:#1c1c1c;font-weight:700;letter-spacing:0.321px;-webkit-text-stroke:0.10px">Monthly P<span class="e">...</span></span>
<span class="t c" style="left:662.60px;top:129px;font-size:8.14px;line-height:14px;color:#3c3c3c;-webkit-text-stroke:0.14px;width:52.70px">1 Std. 30 Minuten</span>
<svg class="ic" style="left:728.60px;top:123.85px;width:11.40px;height:11.40px" viewBox="0 0 40 40"><defs><clipPath id="c4"><circle cx="20" cy="20" r="20"/></clipPath></defs><g clip-path="url(#c4)"><rect width="40" height="40" fill="#8fd75f"/><path d="M4 42c0-9 5-13 16.500-13S37 33 37 42z" fill="#b9b9b9"/><g transform="translate(20.500 16.300) scale(1.250) translate(-20 -17.500)"><rect x="16.300" y="23" width="7.400" height="10" rx="2.500" fill="#d9a17f"/><ellipse cx="20" cy="17.500" rx="7.300" ry="9.300" fill="#d9a17f"/><path d="M12.400 18c-1.600-9 2.600-13 7.600-13s9.200 4 7.600 13c-.8-4.500-2.300-6.500-7.600-6.500S13.200 13.500 12.400 18z" fill="#3a2a20"/></g></g></svg>
<svg class="ic" style="left:741.20px;top:123.85px;width:11.40px;height:11.40px" viewBox="0 0 40 40"><defs><clipPath id="c5"><circle cx="20" cy="20" r="20"/></clipPath></defs><g clip-path="url(#c5)"><rect width="40" height="40" fill="#4cc4ec"/><path d="M4 42c0-9 5-13 16.500-13S37 33 37 42z" fill="#9aa3a8"/><g transform="translate(20.500 16.300) scale(1.250) translate(-20 -17.500)"><rect x="16.300" y="23" width="7.400" height="10" rx="2.500" fill="#dca98a"/><ellipse cx="20" cy="17.500" rx="7.300" ry="9.300" fill="#dca98a"/><path d="M12.400 18c-1.600-9 2.600-13 7.600-13s9.200 4 7.600 13c-.8-4.500-2.300-6.500-7.600-6.500S13.200 13.500 12.400 18z" fill="#5a3b28"/><g fill="none" stroke="#333" stroke-width="1.100"><circle cx="16.800" cy="18" r="2.600"/><circle cx="23.200" cy="18" r="2.600"/><path d="M19.400 18h1.200"/></g></g></g></svg>
<div class="b" style="left:420.80px;top:150.80px;width:65.80px;height:27.90px;background:#fff;border-radius:2px;box-shadow:0 0 1px rgba(0,0,0,.12)"></div>
<div class="b" style="left:420.80px;top:152.30px;width:4.50px;height:24.90px;background:#e6e6e6"></div>
<div class="b" style="left:420.80px;top:150.80px;width:65.80px;height:2.40px;background:#84d6f5;border-radius:2px 2px 0 0"></div>
<div class="b" style="left:420.80px;top:176.00px;width:65.80px;height:2.70px;background:#f5a01c;border-radius:0 0 2px 2px"></div>
<span class="t" style="left:430.10px;top:152px;font-size:8.14px;line-height:14px;color:#1c1c1c;font-weight:700;letter-spacing:0.338px;-webkit-text-stroke:0.10px">Repair p<span class="e">...</span></span>
<span class="t c" style="left:430.10px;top:164px;font-size:8.14px;line-height:14px;color:#3c3c3c;letter-spacing:-0.042px;-webkit-text-stroke:0.14px;width:55.50px">1 Std. 0 Min</span>
<div class="b" style="left:486.90px;top:150.80px;width:66.30px;height:27.90px;background:#fff;border-radius:2px;box-shadow:0 0 1px rgba(0,0,0,.12)"></div>
<div class="b" style="left:486.90px;top:152.30px;width:4.50px;height:24.90px;background:#e6e6e6"></div>
<div class="b" style="left:486.90px;top:150.80px;width:66.30px;height:2.40px;background:#b560d8;border-radius:2px 2px 0 0"></div>
<div class="b" style="left:486.90px;top:176.00px;width:66.30px;height:2.70px;background:#e9131c;border-radius:0 0 2px 2px"></div>
<span class="t" style="left:496.20px;top:152px;font-size:8.14px;line-height:14px;color:#1c1c1c;font-weight:700;letter-spacing:0.263px;-webkit-text-stroke:0.10px">En<span class="e">...</span></span>
<span class="t c" style="left:496.20px;top:164px;font-size:8.14px;line-height:14px;color:#3c3c3c;letter-spacing:-0.378px;-webkit-text-stroke:0.14px;width:19.80px">1 Std. 0 Min</span>
<svg class="ic" style="left:528.90px;top:158.95px;width:11.40px;height:11.40px" viewBox="0 0 40 40"><defs><clipPath id="c6"><circle cx="20" cy="20" r="20"/></clipPath></defs><g clip-path="url(#c6)"><rect width="40" height="40" fill="#d9d9de"/><path d="M4 42c0-9 5-13 16.500-13S37 33 37 42z" fill="#f2f2f2"/><path d="M4 42c0-8 4-10.500 10-11.300l6 9.300 6-9.300c6 .8 10 3.300 10 11.300z" fill="#25252b"/><path d="M15 30.500l5 9 5-9z" fill="#f6f6f6"/><g transform="translate(20.500 16.300) scale(1.250) translate(-20 -17.500)"><rect x="16.300" y="23" width="7.400" height="10" rx="2.500" fill="#c9916f"/><ellipse cx="20" cy="17.500" rx="7.300" ry="9.300" fill="#c9916f"/><path d="M12.400 18c-1.600-9 2.600-13 7.600-13s9.200 4 7.600 13c-.8-4.500-2.300-6.500-7.600-6.500S13.200 13.500 12.400 18z" fill="#1d1a19"/><path d="M12.800 19.500c.3 9 3.400 11 7.200 11s6.900-2 7.200-11c-1.500 4-3.700 5-7.200 5s-5.700-1-7.200-5z" fill="#1d1a19"/></g></g></svg>
<svg class="ic" style="left:541.90px;top:158.95px;width:11.40px;height:11.40px" viewBox="0 0 40 40"><defs><clipPath id="c7"><circle cx="20" cy="20" r="20"/></clipPath></defs><g clip-path="url(#c7)"><rect width="40" height="40" fill="#9d8ff2"/><path d="M8 42C5 24 8 5 20 5s15 19 12 37z" fill="#2b1a1c"/><path d="M4 42c0-9 5-13 16.500-13S37 33 37 42z" fill="#e9d9e8"/><g transform="translate(20.500 16.300) scale(1.250) translate(-20 -17.500)"><rect x="16.300" y="23" width="7.400" height="10" rx="2.500" fill="#cf9a80"/><ellipse cx="20" cy="17.500" rx="7.300" ry="9.300" fill="#cf9a80"/><path d="M12.300 19c-1.300-9 2.700-13 7.700-13s9 4 7.700 13c-1-4.500-3-7-7.700-7s-6.700 2.500-7.700 7z" fill="#2b1a1c"/></g></g></svg>
<div class="b" style="left:553.70px;top:150.80px;width:65.70px;height:27.90px;background:#fff;border-radius:2px;box-shadow:0 0 1px rgba(0,0,0,.12)"></div>
<div class="b" style="left:553.70px;top:152.30px;width:4.50px;height:24.90px;background:#e6e6e6"></div>
<div class="b" style="left:553.70px;top:150.80px;width:65.70px;height:2.40px;background:#3fbd62;border-radius:2px 2px 0 0"></div>
<div class="b" style="left:553.70px;top:176.00px;width:65.70px;height:2.70px;background:#e9131c;border-radius:0 0 2px 2px"></div>
<span class="t" style="left:563.00px;top:152px;font-size:8.14px;line-height:14px;color:#1c1c1c;font-weight:700;letter-spacing:0.430px;-webkit-text-stroke:0.10px">Check p<span class="e">...</span></span>
<span class="t c" style="left:563.00px;top:164px;font-size:8.14px;line-height:14px;color:#3c3c3c;letter-spacing:-0.051px;-webkit-text-stroke:0.14px;width:55.40px">1 Std. 0 Min</span>
<div class="b" style="left:619.60px;top:150.80px;width:132.80px;height:27.90px;background:#fff;border-radius:2px;box-shadow:0 0 1px rgba(0,0,0,.12)"></div>
<div class="b" style="left:619.60px;top:152.30px;width:4.50px;height:24.90px;background:#e6e6e6"></div>
<div class="b" style="left:619.60px;top:150.80px;width:132.80px;height:2.40px;background:#f3e0f6;border-radius:2px 2px 0 0"></div>
<div class="b" style="left:619.60px;top:176.00px;width:132.80px;height:2.70px;background:#f5a01c;border-radius:0 0 2px 2px"></div>
<span class="t" style="left:628.90px;top:152px;font-size:8.14px;line-height:14px;color:#1c1c1c;font-weight:700;letter-spacing:0.168px;-webkit-text-stroke:0.10px">Repair Pump 1A - 10035</span>
<span class="t c" style="left:628.90px;top:164px;font-size:8.14px;line-height:14px;color:#3c3c3c;letter-spacing:0.282px;-webkit-text-stroke:0.14px;width:122.50px">2 Std. 0 Minuten</span>
<div class="b" style="left:486.90px;top:186.00px;width:66.30px;height:27.90px;background:#fff;border-radius:2px;box-shadow:0 0 1px rgba(0,0,0,.12)"></div>
<div class="b" style="left:486.90px;top:187.50px;width:4.50px;height:24.90px;background:#e6e6e6"></div>
<div class="b" style="left:486.90px;top:186.00px;width:66.30px;height:2.40px;background:#3fbd62;border-radius:2px 2px 0 0"></div>
<div class="b" style="left:486.90px;top:211.20px;width:66.30px;height:2.70px;background:#e6e6e6;border-radius:0 0 2px 2px"></div>
<span class="t" style="left:496.20px;top:188px;font-size:8.14px;line-height:14px;color:#1c1c1c;font-weight:700;letter-spacing:0.419px;-webkit-text-stroke:0.10px">Defect h<span class="e">...</span></span>
<span class="t c" style="left:496.20px;top:200px;font-size:8.14px;line-height:14px;color:#3c3c3c;letter-spacing:-0.051px;-webkit-text-stroke:0.14px;width:56.00px">1 Std. 0 Min</span>
<div class="b" style="left:653.30px;top:186.00px;width:99.20px;height:27.90px;background:#fff;border-radius:2px;box-shadow:0 0 1px rgba(0,0,0,.12)"></div>
<div class="b" style="left:653.30px;top:187.50px;width:4.50px;height:24.90px;background:#e6e6e6"></div>
<div class="b" style="left:653.30px;top:186.00px;width:99.20px;height:2.40px;background:#b560d8;border-radius:2px 2px 0 0"></div>
<div class="b" style="left:653.30px;top:211.20px;width:99.20px;height:2.70px;background:#f5a01c;border-radius:0 0 2px 2px"></div>
<span class="t" style="left:662.60px;top:188px;font-size:8.14px;line-height:14px;color:#1c1c1c;font-weight:700;letter-spacing:0.321px;-webkit-text-stroke:0.10px">Monthly P<span class="e">...</span></span>
<span class="t c" style="left:662.60px;top:200px;font-size:8.14px;line-height:14px;color:#3c3c3c;-webkit-text-stroke:0.14px;width:52.70px">1 Std. 30 Minuten</span>
<svg class="ic" style="left:728.60px;top:194.15px;width:11.40px;height:11.40px" viewBox="0 0 40 40"><defs><clipPath id="c8"><circle cx="20" cy="20" r="20"/></clipPath></defs><g clip-path="url(#c8)"><rect width="40" height="40" fill="#8fd75f"/><path d="M4 42c0-9 5-13 16.500-13S37 33 37 42z" fill="#b9b9b9"/><g transform="translate(20.500 16.300) scale(1.250) translate(-20 -17.500)"><rect x="16.300" y="23" width="7.400" height="10" rx="2.500" fill="#d9a17f"/><ellipse cx="20" cy="17.500" rx="7.300" ry="9.300" fill="#d9a17f"/><path d="M12.400 18c-1.600-9 2.600-13 7.600-13s9.200 4 7.600 13c-.8-4.500-2.300-6.500-7.600-6.500S13.200 13.500 12.400 18z" fill="#3a2a20"/></g></g></svg>
<svg class="ic" style="left:741.20px;top:194.15px;width:11.40px;height:11.40px" viewBox="0 0 40 40"><defs><clipPath id="c9"><circle cx="20" cy="20" r="20"/></clipPath></defs><g clip-path="url(#c9)"><rect width="40" height="40" fill="#4cc4ec"/><path d="M4 42c0-9 5-13 16.500-13S37 33 37 42z" fill="#9aa3a8"/><g transform="translate(20.500 16.300) scale(1.250) translate(-20 -17.500)"><rect x="16.300" y="23" width="7.400" height="10" rx="2.500" fill="#dca98a"/><ellipse cx="20" cy="17.500" rx="7.300" ry="9.300" fill="#dca98a"/><path d="M12.400 18c-1.600-9 2.600-13 7.600-13s9.200 4 7.600 13c-.8-4.500-2.300-6.500-7.600-6.500S13.200 13.500 12.400 18z" fill="#5a3b28"/><g fill="none" stroke="#333" stroke-width="1.100"><circle cx="16.800" cy="18" r="2.600"/><circle cx="23.200" cy="18" r="2.600"/><path d="M19.400 18h1.200"/></g></g></g></svg>
<div class="b" style="left:1010.50px;top:50.40px;width:10.50px;height:175.10px;background:#fafafa;border-left:1px solid #efefef;box-sizing:border-box"></div>
<div class="b" style="left:1013.20px;top:144.00px;width:5.70px;height:63.50px;background:#c2c2c2;border-radius:3px"></div>
<div class="b" style="left:283.80px;top:225.50px;width:726.70px;height:11.90px;background:#f8f8f8"></div>
<div class="b" style="left:830.00px;top:229.60px;width:161.00px;height:5.60px;background:#c2c2c2;border-radius:3px"></div>
<div class="b" style="left:1010.50px;top:225.50px;width:10.50px;height:11.90px;background:#fff"></div>
<div class="b" style="left:48.00px;top:241.60px;width:973.00px;height:220.40px;background:#fff"></div>
<div class="b" style="left:58.00px;top:247.30px;width:409.60px;height:21.30px;background:#f4f4f4;border-radius:2px"></div>
<svg class="ic" style="left:63.30px;top:251.30px;width:13.80px;height:13.80px" viewBox="0 0 24 24" fill="#555"><path d="M15.5 14h-.79l-.28-.27C15.41 12.59 16 11.11 16 9.5 16 5.91 13.09 3 9.5 3S3 5.91 3 9.5 5.91 16 9.5 16c1.61 0 3.09-.59 4.23-1.57l.27.28v.79l5 4.99L20.49 19l-4.99-5zm-6 0C7.01 14 5 11.99 5 9.5S7.01 5 9.5 5 14 7.01 14 9.5 11.99 14 9.5 14z"/></svg>
<span class="t" style="left:82.00px;top:251px;font-size:7.40px;line-height:14px;color:#a8a8a8;letter-spacing:0.194px;-webkit-text-stroke:0.14px">Suche nach Auftragsart oder Titel</span>
<div class="b" style="left:811.00px;top:246.50px;width:52.00px;height:22.70px;box-sizing:border-box;border-radius:2.500px;background:#f1f1f1;border:1px solid #e2e2e2;border-radius:2.500px 0 0 2.500px"></div>
<div class="b" style="left:862.00px;top:246.50px;width:34.60px;height:22.70px;box-sizing:border-box;border-radius:2.500px;background:#f1f1f1;border:1px solid #e2e2e2;border-radius:0 2.500px 2.500px 0"></div>
<svg class="ic" style="left:815.75px;top:251.25px;width:13.30px;height:13.30px" viewBox="0 0 24 24" fill="#222"><path d="M4.25 5.61C6.27 8.2 10 13 10 13v6c0 .55.45 1 1 1h2c.55 0 1-.45 1-1v-6s3.72-4.8 5.74-7.39c.51-.66.04-1.61-.79-1.61H5.04c-.83 0-1.3.95-.79 1.61z"/></svg>
<span class="t" style="left:832.60px;top:251px;font-size:8.88px;line-height:14px;color:#222;font-weight:700;letter-spacing:0.499px;-webkit-text-stroke:0.10px">Filter</span>
<svg class="ic" style="left:872.30px;top:250.80px;width:14.80px;height:14.80px" viewBox="0 0 24 24" fill="#555"><path d="M16.59 8.59L12 13.17 7.41 8.59 6 10l6 6 6-6z"/></svg>
<div class="b" style="left:901.50px;top:246.50px;width:71.10px;height:22.70px;box-sizing:border-box;border-radius:2.500px;background:#e0e0e0"></div>
<span class="t" style="left:915.60px;top:252px;font-size:8.90px;line-height:14px;color:#adadad;font-weight:700;letter-spacing:0.060px;-webkit-text-stroke:0.10px">Freigeben</span>
<div class="b" style="left:977.50px;top:246.50px;width:34.30px;height:22.70px;box-sizing:border-box;border-radius:2.500px;background:#f1f1f1;border:1px solid #e2e2e2"></div>
<svg class="ic" style="left:987.40px;top:250.60px;width:14.80px;height:14.80px" viewBox="0 0 24 24" fill="#222"><path d="M19 19H5V5h7V3H5c-1.11 0-2 .9-2 2v14c0 1.1.89 2 2 2h14c1.1 0 2-.9 2-2v-7h-2v7zM14 3v2h3.59l-9.83 9.83 1.41 1.41L19 6.41V10h2V3h-7z"/></svg>
<div class="b" style="left:85.90px;top:283.00px;width:1.20px;height:13.80px;background:#e9e9e9"></div>
<div class="b" style="left:114.90px;top:283.00px;width:1.20px;height:13.80px;background:#e9e9e9"></div>
<div class="b" style="left:230.70px;top:283.00px;width:1.20px;height:13.80px;background:#e9e9e9"></div>
<div class="b" style="left:461.00px;top:283.00px;width:1.20px;height:13.80px;background:#e9e9e9"></div>
<div class="b" style="left:605.70px;top:283.00px;width:1.20px;height:13.80px;background:#e9e9e9"></div>
<div class="b" style="left:721.20px;top:283.00px;width:1.20px;height:13.80px;background:#e9e9e9"></div>
<div class="b" style="left:860.00px;top:283.00px;width:1.20px;height:13.80px;background:#e9e9e9"></div>
<div class="b" style="left:975.00px;top:283.00px;width:1.20px;height:13.80px;background:#e9e9e9"></div>
<span class="t" style="left:121.30px;top:283px;font-size:10.36px;line-height:14px;color:#2b2b2b;letter-spacing:-0.063px;-webkit-text-stroke:0.28px">Auftrags ID</span>
<span class="t" style="left:237.00px;top:283px;font-size:10.36px;line-height:14px;color:#2b2b2b;letter-spacing:-0.172px;-webkit-text-stroke:0.28px">Titel</span>
<span class="t" style="left:468.00px;top:283px;font-size:10.36px;line-height:14px;color:#2b2b2b;letter-spacing:0.213px;-webkit-text-stroke:0.28px">Auftragsart</span>
<span class="t" style="left:612.00px;top:283px;font-size:10.36px;line-height:14px;color:#2b2b2b;letter-spacing:0.160px;-webkit-text-stroke:0.28px">Arbeitstyp</span>
<span class="t" style="left:727.50px;top:283px;font-size:10.36px;line-height:14px;color:#2b2b2b;letter-spacing:-0.022px;-webkit-text-stroke:0.28px">Zugewiesen an</span>
<span class="t" style="left:866.00px;top:283px;font-size:10.36px;line-height:14px;color:#2b2b2b;letter-spacing:0.314px;-webkit-text-stroke:0.28px">Startdatum</span>
<span class="t c" style="left:981.80px;top:283px;font-size:10.36px;line-height:14px;color:#2b2b2b;letter-spacing:-0.041px;-webkit-text-stroke:0.28px;width:30.20px">Fällig am</span>
<div class="b" style="left:58.00px;top:305.90px;width:954.00px;height:1.20px;background:#efefef"></div>
<div class="b" style="left:1011.50px;top:306.00px;width:1.00px;height:148.50px;background:#ececec"></div>
<div class="b" style="left:58.00px;top:453.60px;width:954.00px;height:1.00px;background:#eaeaea"></div>
<div class="b" style="left:1001.80px;top:307.00px;width:9.70px;height:146.60px;background:#f6f6f6"></div>
<div class="b" style="left:1004.30px;top:308.20px;width:5.70px;height:15.00px;background:#b9b9b9;border-radius:3px"></div>
<svg class="ic" style="left:94.10px;top:314.30px;width:14.80px;height:14.80px" viewBox="0 0 24 24" fill="#666"><path d="M16.59 8.59L12 13.17 7.41 8.59 6 10l6 6 6-6z"/></svg>
<span class="t" style="left:121.30px;top:314px;font-size:9.60px;line-height:14px;color:#333;letter-spacing:-0.247px;-webkit-text-stroke:0.14px">10000</span>
<span class="t" style="left:236.80px;top:315px;font-size:8.14px;line-height:14px;color:#3b88bf;letter-spacing:0.544px;-webkit-text-stroke:0.14px">Motor overheating</span>
<div class="b" style="left:467.50px;top:314.90px;width:125.50px;height:13.50px;background:#f0f0f0;border-radius:7px"></div>
<span class="t" style="left:473.50px;top:315px;font-size:8.14px;line-height:14px;color:#757575;letter-spacing:0.464px;-webkit-text-stroke:0.22px">PM01 - Ungeplante Wartung</span>
<div class="b" style="left:612.00px;top:314.90px;width:103.80px;height:13.50px;background:#f0f0f0;border-radius:7px"></div>
<span class="t" style="left:618.00px;top:315px;font-size:8.14px;line-height:14px;color:#757575;letter-spacing:0.477px;-webkit-text-stroke:0.22px">Fehlerbehebung / Re<span class="e">...</span></span>
<svg class="ic" style="left:728.55px;top:312.75px;width:16.50px;height:16.50px" viewBox="0 0 40 40"><defs><clipPath id="c10"><circle cx="20" cy="20" r="20"/></clipPath></defs><g clip-path="url(#c10)"><rect width="40" height="40" fill="#8fd75f"/><path d="M4 42c0-9 5-13 16.500-13S37 33 37 42z" fill="#b9b9b9"/><g transform="translate(20.500 16.300) scale(1.250) translate(-20 -17.500)"><rect x="16.300" y="23" width="7.400" height="10" rx="2.500" fill="#d9a17f"/><ellipse cx="20" cy="17.500" rx="7.300" ry="9.300" fill="#d9a17f"/><path d="M12.400 18c-1.600-9 2.600-13 7.600-13s9.200 4 7.600 13c-.8-4.500-2.300-6.500-7.600-6.500S13.200 13.500 12.400 18z" fill="#3a2a20"/></g></g></svg>
<span class="t" style="left:751.80px;top:310px;font-size:10.40px;line-height:14px;color:#333;letter-spacing:-0.117px;-webkit-text-stroke:0.14px">Bode Joshua</span>
<span class="t" style="left:751.80px;top:322px;font-size:7.40px;line-height:14px;color:#ababab;letter-spacing:0.263px;-webkit-text-stroke:0.14px">mobile.02@cmms-13-demo.c</span>
<span class="t" style="left:866.00px;top:310px;font-size:8.14px;line-height:14px;color:#333;letter-spacing:0.022px;-webkit-text-stroke:0.14px">28.05.2025 - 11:53</span>
<span class="t" style="left:866.00px;top:321px;font-size:7.40px;line-height:14px;color:#8a8a8a;letter-spacing:0.304px;-webkit-text-stroke:0.14px">Mittwoch</span>
<span class="t c" style="left:981.80px;top:310px;font-size:8.14px;line-height:14px;color:#333;letter-spacing:-0.290px;-webkit-text-stroke:0.14px;width:20.00px">31.05.2025</span>
<span class="t c" style="left:981.80px;top:321px;font-size:7.40px;line-height:14px;color:#8a8a8a;letter-spacing:0.300px;-webkit-text-stroke:0.14px;width:20.00px">Samstag</span>
<svg class="ic" style="left:94.10px;top:344.30px;width:14.80px;height:14.80px" viewBox="0 0 24 24" fill="#666"><path d="M16.59 8.59L12 13.17 7.41 8.59 6 10l6 6 6-6z"/></svg>
<span class="t" style="left:121.30px;top:344px;font-size:9.60px;line-height:14px;color:#333;letter-spacing:-0.247px;-webkit-text-stroke:0.14px">10002</span>
<span class="t" style="left:236.80px;top:345px;font-size:8.14px;line-height:14px;color:#3b88bf;letter-spacing:0.410px;-webkit-text-stroke:0.14px">Pump A is leaking</span>
<div class="b" style="left:467.50px;top:344.90px;width:125.50px;height:13.50px;background:#f0f0f0;border-radius:7px"></div>
<span class="t" style="left:473.50px;top:345px;font-size:8.14px;line-height:14px;color:#757575;letter-spacing:0.464px;-webkit-text-stroke:0.22px">PM01 - Ungeplante Wartung</span>
<div class="b" style="left:612.00px;top:344.90px;width:103.80px;height:13.50px;background:#f0f0f0;border-radius:7px"></div>
<span class="t" style="left:618.00px;top:345px;font-size:8.14px;line-height:14px;color:#757575;letter-spacing:0.477px;-webkit-text-stroke:0.22px">Fehlerbehebung / Re<span class="e">...</span></span>
<svg class="ic" style="left:728.55px;top:342.75px;width:16.50px;height:16.50px" viewBox="0 0 40 40"><defs><clipPath id="c11"><circle cx="20" cy="20" r="20"/></clipPath></defs><g clip-path="url(#c11)"><rect width="40" height="40" fill="#8c8ff0"/><path d="M4 42c0-9 5-13 16.500-13S37 33 37 42z" fill="#e8e8f8"/><g transform="translate(20.500 16.300) scale(1.250) translate(-20 -17.500)"><rect x="16.300" y="23" width="7.400" height="10" rx="2.500" fill="#c48a68"/><ellipse cx="20" cy="17.500" rx="7.300" ry="9.300" fill="#c48a68"/><path d="M11.500 19c-2.500-10 2.500-15 8.500-15s11 5 8.500 15c-.8-4.500-2.800-7-8.500-7s-7.700 2.500-8.500 7z" fill="#2a1c18"/><circle cx="12" cy="13" r="3.400" fill="#2a1c18"/><circle cx="28" cy="13" r="3.400" fill="#2a1c18"/><path d="M12.800 20c.4 9 3.400 11 7.200 11s6.800-2 7.200-11c-1.600 3.800-3.700 4.800-7.200 4.800s-5.600-1-7.200-4.800z" fill="#2a1c18"/></g></g></svg>
<span class="t" style="left:751.80px;top:340px;font-size:10.40px;line-height:14px;color:#333;letter-spacing:-0.089px;-webkit-text-stroke:0.14px">Apple John</span>
<span class="t" style="left:751.80px;top:352px;font-size:7.40px;line-height:14px;color:#ababab;letter-spacing:0.194px;-webkit-text-stroke:0.14px">trial.01@cmms-13-demo.com</span>
<span class="t" style="left:866.00px;top:340px;font-size:8.14px;line-height:14px;color:#333;letter-spacing:-0.160px;-webkit-text-stroke:0.14px">10.07.2025 - 18:01</span>
<span class="t" style="left:866.00px;top:351px;font-size:7.40px;line-height:14px;color:#8a8a8a;letter-spacing:0.231px;-webkit-text-stroke:0.14px">Donnerstag</span>
<span class="t c" style="left:981.80px;top:340px;font-size:8.14px;line-height:14px;color:#333;letter-spacing:-0.290px;-webkit-text-stroke:0.14px;width:20.00px">10.07.2025</span>
<span class="t c" style="left:981.80px;top:351px;font-size:7.40px;line-height:14px;color:#8a8a8a;letter-spacing:0.300px;-webkit-text-stroke:0.14px;width:20.00px">Donnerstag</span>
<svg class="ic" style="left:94.10px;top:374.30px;width:14.80px;height:14.80px" viewBox="0 0 24 24" fill="#666"><path d="M16.59 8.59L12 13.17 7.41 8.59 6 10l6 6 6-6z"/></svg>
<span class="t" style="left:121.30px;top:374px;font-size:9.60px;line-height:14px;color:#333;letter-spacing:-0.247px;-webkit-text-stroke:0.14px">10003</span>
<span class="t" style="left:236.80px;top:375px;font-size:8.14px;line-height:14px;color:#3b88bf;letter-spacing:0.424px;-webkit-text-stroke:0.14px">Pumps Inspection Round</span>
<div class="b" style="left:467.50px;top:374.90px;width:85.50px;height:13.50px;background:#f0f0f0;border-radius:7px"></div>
<span class="t" style="left:473.50px;top:375px;font-size:8.14px;line-height:14px;color:#757575;letter-spacing:0.501px;-webkit-text-stroke:0.22px">PM04 - Inspection</span>
<svg class="ic" style="left:728.05px;top:372.75px;width:16.50px;height:16.50px" viewBox="0 0 40 40"><defs><clipPath id="c12"><circle cx="20" cy="20" r="20"/></clipPath></defs><g clip-path="url(#c12)"><rect width="40" height="40" fill="#d9d9de"/><path d="M4 42c0-9 5-13 16.500-13S37 33 37 42z" fill="#f2f2f2"/><path d="M4 42c0-8 4-10.500 10-11.300l6 9.300 6-9.300c6 .8 10 3.300 10 11.300z" fill="#25252b"/><path d="M15 30.500l5 9 5-9z" fill="#f6f6f6"/><g transform="translate(20.500 16.300) scale(1.250) translate(-20 -17.500)"><rect x="16.300" y="23" width="7.400" height="10" rx="2.500" fill="#c9916f"/><ellipse cx="20" cy="17.500" rx="7.300" ry="9.300" fill="#c9916f"/><path d="M12.400 18c-1.600-9 2.600-13 7.600-13s9.200 4 7.600 13c-.8-4.500-2.300-6.500-7.600-6.500S13.200 13.500 12.400 18z" fill="#1d1a19"/><path d="M12.800 19.500c.3 9 3.400 11 7.200 11s6.900-2 7.200-11c-1.500 4-3.700 5-7.200 5s-5.700-1-7.200-5z" fill="#1d1a19"/></g></g></svg>
<svg class="ic" style="left:741.25px;top:372.75px;width:16.50px;height:16.50px" viewBox="0 0 40 40"><defs><clipPath id="c13"><circle cx="20" cy="20" r="20"/></clipPath></defs><g clip-path="url(#c13)"><rect width="40" height="40" fill="#9d8ff2"/><path d="M8 42C5 24 8 5 20 5s15 19 12 37z" fill="#2b1a1c"/><path d="M4 42c0-9 5-13 16.500-13S37 33 37 42z" fill="#e9d9e8"/><g transform="translate(20.500 16.300) scale(1.250) translate(-20 -17.500)"><rect x="16.300" y="23" width="7.400" height="10" rx="2.500" fill="#cf9a80"/><ellipse cx="20" cy="17.500" rx="7.300" ry="9.300" fill="#cf9a80"/><path d="M12.300 19c-1.300-9 2.700-13 7.700-13s9 4 7.700 13c-1-4.500-3-7-7.700-7s-6.700 2.500-7.700 7z" fill="#2b1a1c"/></g></g></svg>
<span class="t" style="left:866.00px;top:370px;font-size:8.14px;line-height:14px;color:#333;letter-spacing:-0.172px;-webkit-text-stroke:0.14px">13.10.2025 - 10:37</span>
<span class="t" style="left:866.00px;top:381px;font-size:7.40px;line-height:14px;color:#8a8a8a;letter-spacing:0.329px;-webkit-text-stroke:0.14px">Montag</span>
<span class="t c" style="left:981.80px;top:370px;font-size:8.14px;line-height:14px;color:#333;letter-spacing:-0.290px;-webkit-text-stroke:0.14px;width:20.00px">17.10.2025</span>
<span class="t c" style="left:981.80px;top:381px;font-size:7.40px;line-height:14px;color:#8a8a8a;letter-spacing:0.300px;-webkit-text-stroke:0.14px;width:20.00px">Freitag</span>
<svg class="ic" style="left:94.10px;top:404.30px;width:14.80px;height:14.80px" viewBox="0 0 24 24" fill="#666"><path d="M16.59 8.59L12 13.17 7.41 8.59 6 10l6 6 6-6z"/></svg>
<span class="t" style="left:121.30px;top:404px;font-size:9.60px;line-height:14px;color:#333;letter-spacing:-0.247px;-webkit-text-stroke:0.14px">10004</span>
<span class="t" style="left:236.80px;top:405px;font-size:8.14px;line-height:14px;color:#3b88bf;letter-spacing:0.491px;-webkit-text-stroke:0.14px">Defect hydraulic punp 0708</span>
<div class="b" style="left:467.50px;top:404.90px;width:100.50px;height:13.50px;background:#f0f0f0;border-radius:7px"></div>
<span class="t" style="left:473.50px;top:405px;font-size:8.14px;line-height:14px;color:#757575;letter-spacing:0.383px;-webkit-text-stroke:0.22px">SM01 - Serviceauftrag</span>
<svg class="ic" style="left:728.55px;top:402.75px;width:16.50px;height:16.50px" viewBox="0 0 40 40"><defs><clipPath id="c14"><circle cx="20" cy="20" r="20"/></clipPath></defs><g clip-path="url(#c14)"><rect width="40" height="40" fill="#4cc4ec"/><path d="M4 42c0-9 5-13 16.500-13S37 33 37 42z" fill="#9aa3a8"/><g transform="translate(20.500 16.300) scale(1.250) translate(-20 -17.500)"><rect x="16.300" y="23" width="7.400" height="10" rx="2.500" fill="#dca98a"/><ellipse cx="20" cy="17.500" rx="7.300" ry="9.300" fill="#dca98a"/><path d="M12.400 18c-1.600-9 2.600-13 7.600-13s9.200 4 7.600 13c-.8-4.500-2.300-6.500-7.600-6.500S13.200 13.500 12.400 18z" fill="#5a3b28"/><g fill="none" stroke="#333" stroke-width="1.100"><circle cx="16.800" cy="18" r="2.600"/><circle cx="23.200" cy="18" r="2.600"/><path d="M19.400 18h1.200"/></g></g></g></svg>
<span class="t" style="left:751.80px;top:400px;font-size:10.40px;line-height:14px;color:#333;letter-spacing:-0.319px;-webkit-text-stroke:0.14px">Sloan Neil</span>
<span class="t" style="left:751.80px;top:412px;font-size:7.40px;line-height:14px;color:#ababab;letter-spacing:0.263px;-webkit-text-stroke:0.14px">mobile.05@cmms-13-demo.c</span>
<span class="t" style="left:866.00px;top:400px;font-size:8.14px;line-height:14px;color:#333;letter-spacing:0.134px;-webkit-text-stroke:0.14px">07.08.2025 - 10:48</span>
<span class="t" style="left:866.00px;top:411px;font-size:7.40px;line-height:14px;color:#8a8a8a;letter-spacing:0.231px;-webkit-text-stroke:0.14px">Donnerstag</span>
<span class="t c" style="left:981.80px;top:400px;font-size:8.14px;line-height:14px;color:#333;letter-spacing:-0.290px;-webkit-text-stroke:0.14px;width:20.00px">07.08.2025</span>
<span class="t c" style="left:981.80px;top:411px;font-size:7.40px;line-height:14px;color:#8a8a8a;letter-spacing:0.300px;-webkit-text-stroke:0.14px;width:20.00px">Donnerstag</span>
<svg class="ic" style="left:94.10px;top:434.30px;width:14.80px;height:14.80px" viewBox="0 0 24 24" fill="#666"><path d="M16.59 8.59L12 13.17 7.41 8.59 6 10l6 6 6-6z"/></svg>
<span class="t" style="left:121.30px;top:434px;font-size:9.60px;line-height:14px;color:#333;letter-spacing:-0.247px;-webkit-text-stroke:0.14px">10005</span>
<span class="t" style="left:236.80px;top:435px;font-size:8.14px;line-height:14px;color:#3b88bf;letter-spacing:0.424px;-webkit-text-stroke:0.14px">Clean pump 01</span>
<div class="b" style="left:467.50px;top:434.90px;width:117.50px;height:13.50px;background:#f0f0f0;border-radius:7px"></div>
<span class="t" style="left:473.50px;top:435px;font-size:8.14px;line-height:14px;color:#757575;letter-spacing:0.532px;-webkit-text-stroke:0.22px">PM02 - Geplante Wartung</span>
<div class="b" style="left:612.00px;top:434.90px;width:97.50px;height:13.50px;background:#f0f0f0;border-radius:7px"></div>
<span class="t" style="left:618.00px;top:435px;font-size:8.14px;line-height:14px;color:#757575;letter-spacing:0.567px;-webkit-text-stroke:0.22px">Wartung / Inspektion</span>
<span class="t" style="left:866.00px;top:430px;font-size:8.14px;line-height:14px;color:#333;letter-spacing:0.075px;-webkit-text-stroke:0.14px">27.08.2025 - 12:55</span>
<span class="t" style="left:866.00px;top:441px;font-size:7.40px;line-height:14px;color:#8a8a8a;letter-spacing:0.304px;-webkit-text-stroke:0.14px">Mittwoch</span>
<span class="t c" style="left:981.80px;top:430px;font-size:8.14px;line-height:14px;color:#333;letter-spacing:-0.290px;-webkit-text-stroke:0.14px;width:20.00px">27.08.2025</span>
<span class="t c" style="left:981.80px;top:441px;font-size:7.40px;line-height:14px;color:#8a8a8a;letter-spacing:0.300px;-webkit-text-stroke:0.14px;width:20.00px">Mittwoch</span>
</body></html>
